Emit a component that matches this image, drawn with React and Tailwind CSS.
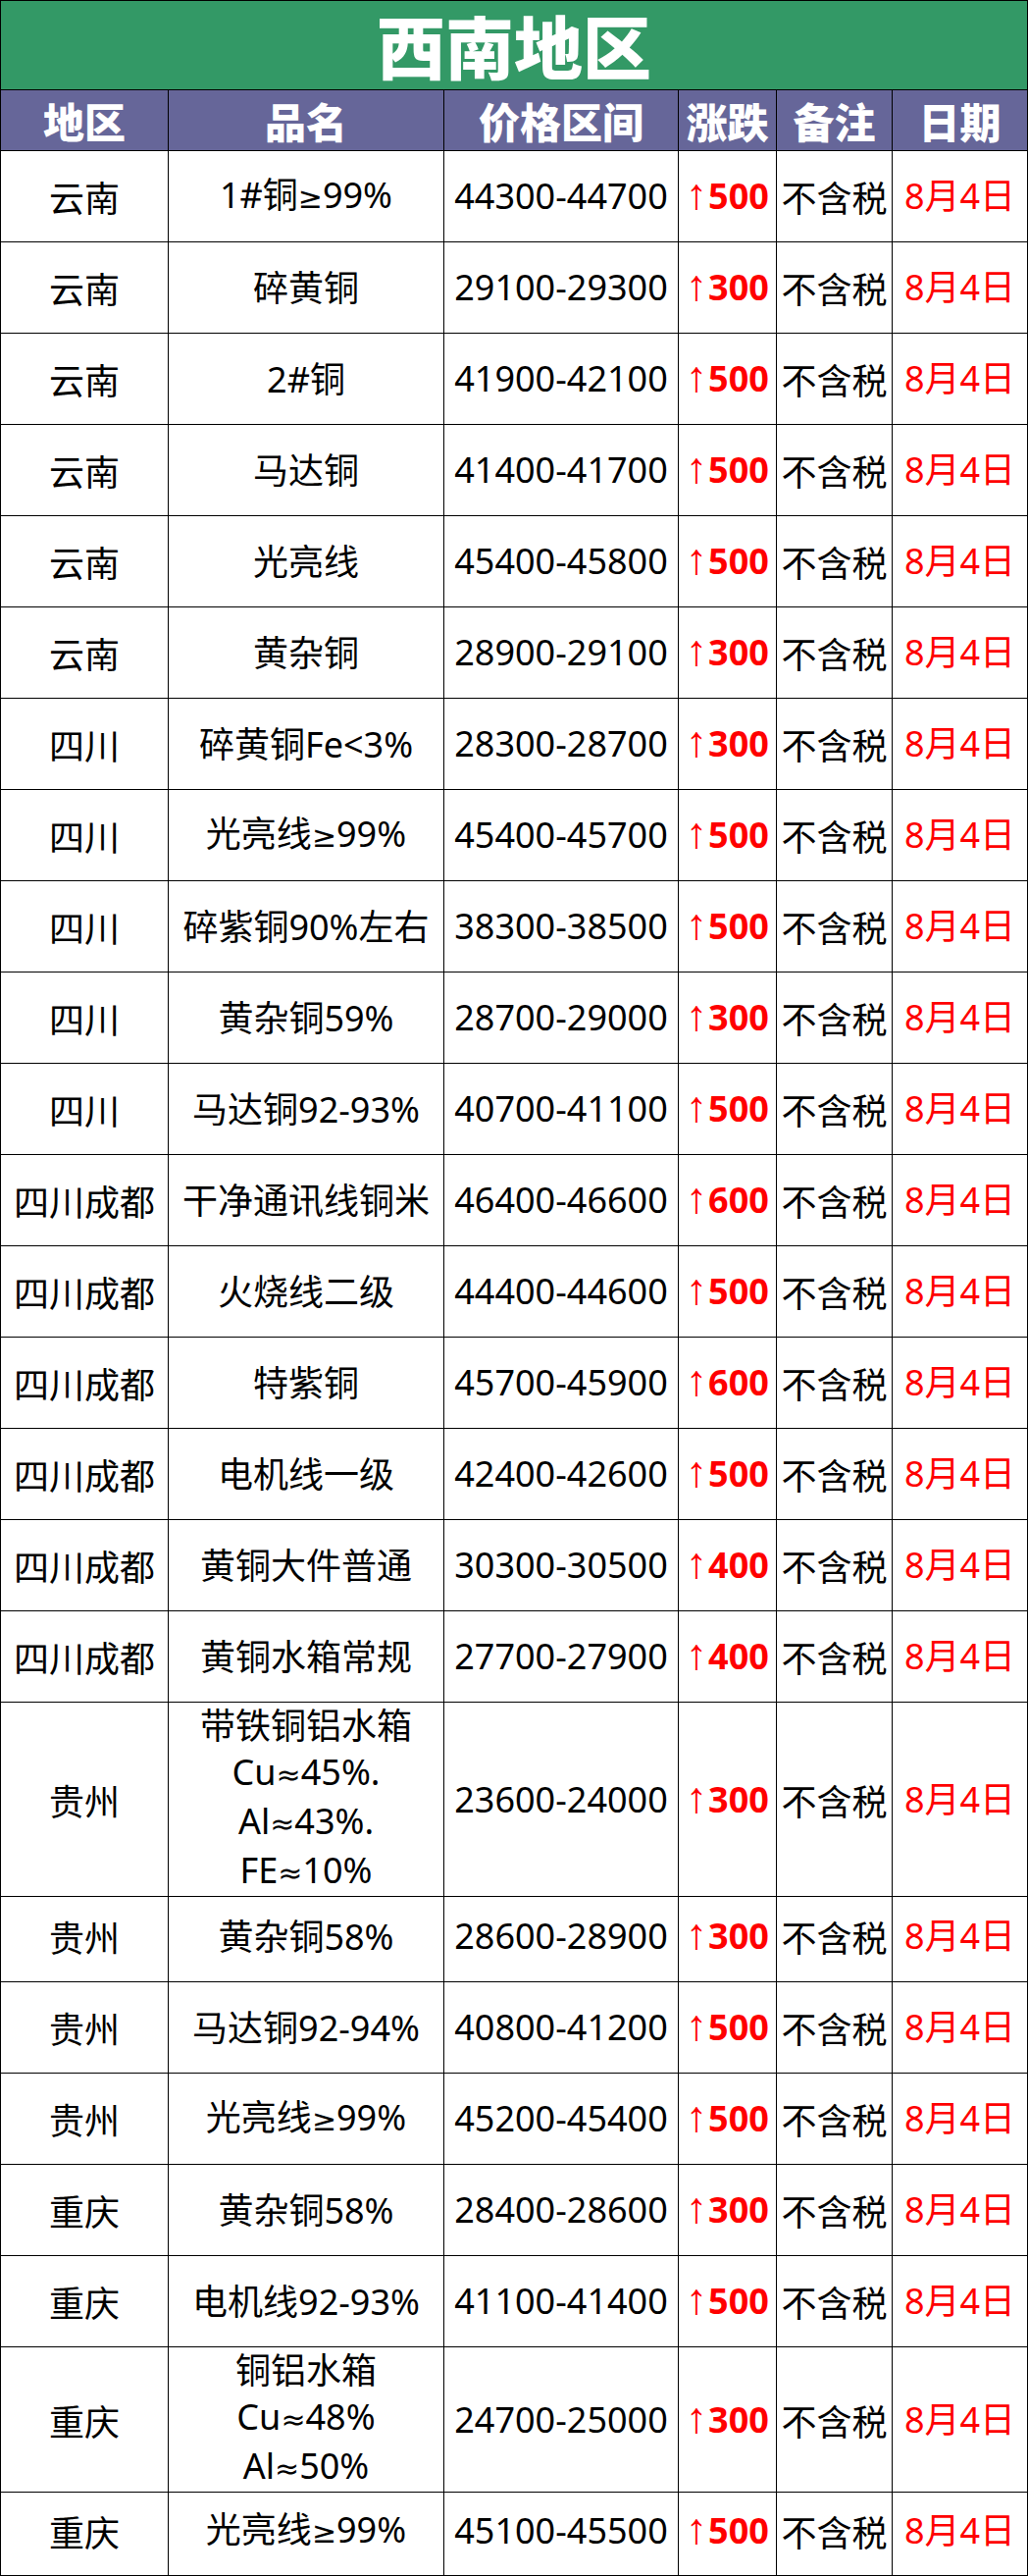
import React from "react";

const rows = [
  ["云南", ["1#铜≥99%"], "44300-44700", "500"],
  ["云南", ["碎黄铜"], "29100-29300", "300"],
  ["云南", ["2#铜"], "41900-42100", "500"],
  ["云南", ["马达铜"], "41400-41700", "500"],
  ["云南", ["光亮线"], "45400-45800", "500"],
  ["云南", ["黄杂铜"], "28900-29100", "300"],
  ["四川", ["碎黄铜Fe<3%"], "28300-28700", "300"],
  ["四川", ["光亮线≥99%"], "45400-45700", "500"],
  ["四川", ["碎紫铜90%左右"], "38300-38500", "500"],
  ["四川", ["黄杂铜59%"], "28700-29000", "300"],
  ["四川", ["马达铜92-93%"], "40700-41100", "500"],
  ["四川成都", ["干净通讯线铜米"], "46400-46600", "600"],
  ["四川成都", ["火烧线二级"], "44400-44600", "500"],
  ["四川成都", ["特紫铜"], "45700-45900", "600"],
  ["四川成都", ["电机线一级"], "42400-42600", "500"],
  ["四川成都", ["黄铜大件普通"], "30300-30500", "400"],
  ["四川成都", ["黄铜水箱常规"], "27700-27900", "400"],
  ["贵州", ["带铁铜铝水箱", "Cu≈45%.", "Al≈43%.", "FE≈10%"], "23600-24000", "300", "h-[192px]"],
  ["贵州", ["黄杂铜58%"], "28600-28900", "300"],
  ["贵州", ["马达铜92-94%"], "40800-41200", "500"],
  ["贵州", ["光亮线≥99%"], "45200-45400", "500"],
  ["重庆", ["黄杂铜58%"], "28400-28600", "300"],
  ["重庆", ["电机线92-93%"], "41100-41400", "500"],
  ["重庆", ["铜铝水箱", "Cu≈48%", "Al≈50%"], "24700-25000", "300", "h-[141px]"],
  ["重庆", ["光亮线≥99%"], "45100-45500", "500", "h-[92px]"],
];

const cols = "grid grid-cols-[171px_281px_239px_100px_118px_138px]";
const cell = "flex items-center justify-center text-center border-r border-b border-black whitespace-nowrap";
const font = { fontFamily: '"Noto Sans", "DejaVu Sans", "Noto Sans CJK SC", sans-serif' };
const cjk = { fontFamily: '"Noto Sans CJK SC", sans-serif' };

function Mixed({ text }) {
  const parts = text.split(/([≥≈])/);
  return (
    <span>
      {parts.map((p, k) =>
        p === "≥" || p === "≈" ? (
          <span key={k} className="text-[30px]" style={{ fontFamily: '"DejaVu Sans", sans-serif' }}>
            {p}
          </span>
        ) : (
          <span key={k}>{p}</span>
        )
      )}
    </span>
  );
}

export default function App() {
  return (
    <div className="w-[1048px] bg-white border-l border-t border-black text-black" style={font}>
      <div className="h-[91px] bg-[#339966] border-r border-b border-black flex items-center justify-center">
        <span className="text-[70px] leading-none font-black text-white" style={cjk}>
          西南地区
        </span>
      </div>
      <div className={`${cols} h-[62px] bg-[#666699] text-white`}>
        {["地区", "品名", "价格区间", "涨跌", "备注", "日期"].map((h) => (
          <div key={h} className={`${cell} text-[42px] leading-[50px] font-black`} style={cjk}>
            {h}
          </div>
        ))}
      </div>
      {rows.map((r, i) => (
        <div key={i} className={`${cols} ${r[4] || "h-[93px]"} text-[36px]`}>
          <div className={cell} style={cjk}>{r[0]}</div>
          <div className={`${cell} flex-col leading-[47px]`}>
            {r[1].map((l, j) => (
              <Mixed key={j} text={l} />
            ))}
          </div>
          <div className={cell}>{r[2]}</div>
          <div className={`${cell} text-[#ff0000]`}>
            <span className="font-normal text-[44px] leading-none mr-[1px] relative top-[-2px]" style={{ fontFamily: '"Liberation Sans", sans-serif' }}>↑</span>
            <span className="font-bold">{r[3]}</span>
          </div>
          <div className={cell} style={cjk}>不含税</div>
          <div className={`${cell} text-[#ff0000]`}>8月4日</div>
        </div>
      ))}
    </div>
  );
}
